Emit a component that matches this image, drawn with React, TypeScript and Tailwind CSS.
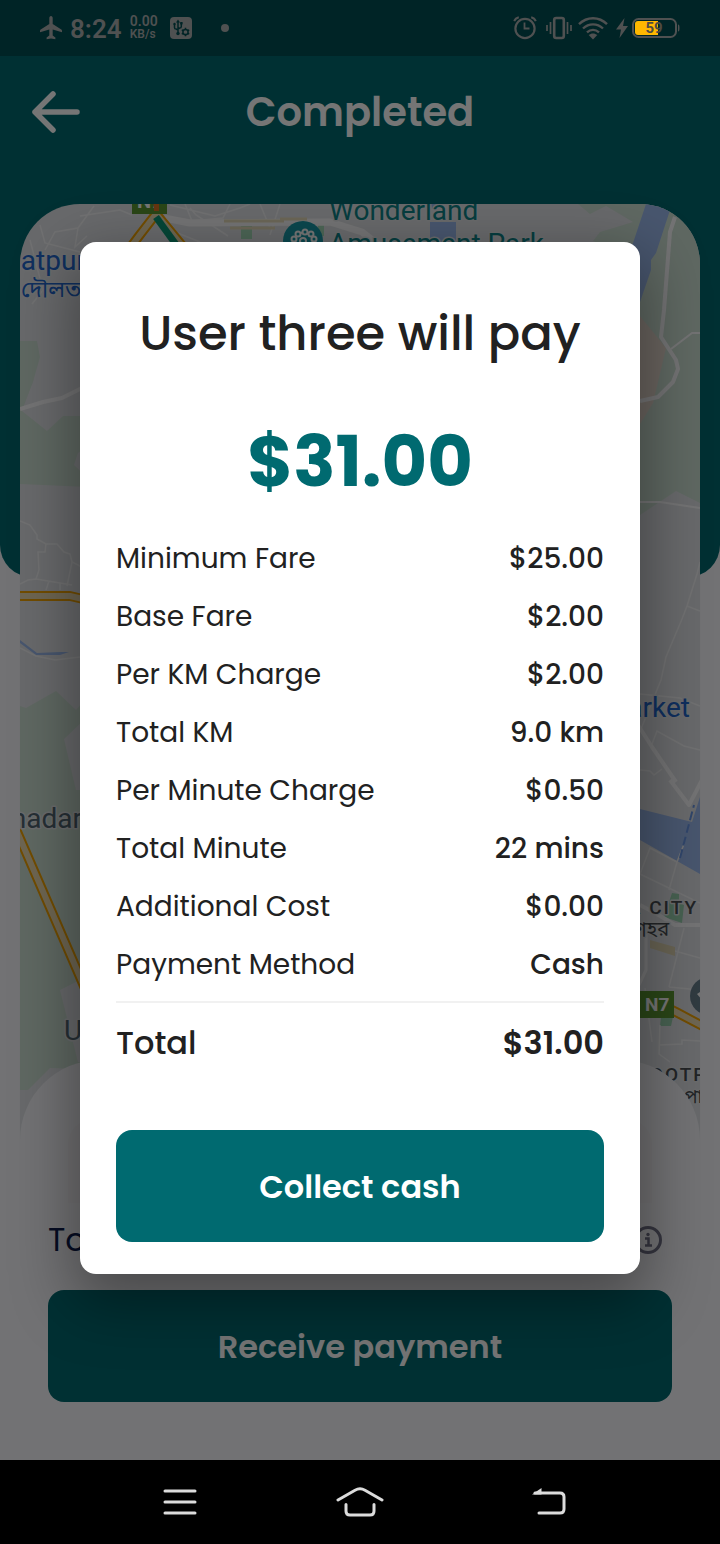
import React from "react";

const fareRows = [
  { label: "Minimum Fare", value: "$25.00" },
  { label: "Base Fare", value: "$2.00" },
  { label: "Per KM Charge", value: "$2.00" },
  { label: "Total KM", value: "9.0 km" },
  { label: "Per Minute Charge", value: "$0.50" },
  { label: "Total Minute", value: "22 mins" },
  { label: "Additional Cost", value: "$0.00" },
  { label: "Payment Method", value: "Cash" },
];

function PlaneIcon() {
  return (
    <svg width="22" height="24" viewBox="0 0 22 24" fill="currentColor" aria-hidden="true">
      <path d="M11 0c1.1 0 1.700 1 1.700 2.200V8l8.600 5.600c.5.300.7.700.7 1.300v1.300l-9.300-2.700v6l2.700 2v1.700L11 22.400l-4.400.8v-1.700l2.700-2v-6L0 16.200v-1.300c0-.6.200-1 .7-1.300L9.300 8V2.200C9.300 1 9.900 0 11 0z" />
    </svg>
  );
}

function UsbIcon() {
  return (
    <svg width="22" height="22" viewBox="0 0 22 22" aria-hidden="true">
      <rect width="22" height="22" rx="4" fill="#4f5151" />
      <g fill="none" stroke="#002426" strokeWidth="1.500">
        <path d="M8 4v12M4.500 7v3.500c0 1 .6 1.600 1.600 1.600L8 13M11.300 6v3.500c0 1-.6 1.600-1.600 1.600L8 12" />
        <circle cx="15.500" cy="15" r="2.600" />
        <path d="M15.500 10.700v1.700M15.500 17.600v1.700M11.800 12.900l1.400.8M17.800 16.300l1.400.8M11.800 17.100l1.400-.8M17.800 13.700l1.400-.8" />
      </g>
      <path d="M8 2.500l2 3H6z" fill="#002426" />
      <circle cx="8" cy="16.500" r="1.700" fill="#002426" />
      <circle cx="4.500" cy="7" r="1.200" fill="#002426" />
      <rect x="10.200" y="5" width="2.400" height="2.400" fill="#002426" />
    </svg>
  );
}

function AlarmIcon() {
  return (
    <svg width="24" height="24" viewBox="0 0 24 24" fill="none" stroke="currentColor" aria-hidden="true">
      <circle cx="12" cy="12.500" r="9.600" strokeWidth="2.200" />
      <path d="M11.500 6.500V12.500H16.500" strokeWidth="1.800" />
      <path d="M1.200 5.200C2 3.200 3.700 1.800 5.800 1.300M22.800 5.200C22 3.200 20.300 1.800 18.200 1.300" strokeWidth="2" />
    </svg>
  );
}

function VibrateIcon() {
  return (
    <svg width="26" height="24" viewBox="0 0 26 24" fill="none" stroke="currentColor" aria-hidden="true">
      <rect x="8.200" y="2" width="9.600" height="20" rx="2" strokeWidth="2.600" />
      <path d="M4.500 6v12M21.500 6v12M1 9v6M25 9v6" strokeWidth="1.700" />
    </svg>
  );
}

function WifiIcon() {
  return (
    <svg width="30" height="23" viewBox="0 0 30 23" fill="none" stroke="currentColor" aria-hidden="true">
      <path d="M1 7.200C9 -.8 21 -.8 29 7.200M5 11.500c5.800-5.500 14.200-5.500 20 0M9 15.300c3.500-3.200 8.500-3.200 12 0" strokeWidth="2.400" />
      <path d="M15 22.500l-4.300-4.400c2.400-2.200 6.200-2.200 8.600 0z" fill="currentColor" stroke="none" />
    </svg>
  );
}

function BatteryIcon() {
  return (
    <svg width="48" height="20" viewBox="0 0 48 20" role="img" aria-label="Battery 59%">
      <rect x="1" y="1" width="43" height="18" rx="5.500" fill="none" stroke="#4f5151" strokeWidth="2" />
      <path d="M46 6.500c1.200 0 1.500 1 1.500 3.500s-.3 3.500-1.500 3.500z" fill="#4f5151" />
      <path d="M6 3h20v14H6a3 3 0 0 1-3-3V6a3 3 0 0 1 3-3z" fill="#ffb800" />
      <text x="22" y="15" textAnchor="middle" fontSize="15" fontWeight="700" fill="#4f4b40" className="font-['Roboto',sans-serif]">59</text>
    </svg>
  );
}

function StatusBar() {
  return (
    <div className="flex h-14 items-center bg-[#002426] pl-10 pr-10 font-['Roboto',sans-serif] text-[#4f5151]">
      <PlaneIcon />
      <span className="ml-2 pt-0.5 text-[26px] font-semibold leading-8">8:24</span>
      <span className="ml-2 flex flex-col text-xs font-semibold leading-[13px]">
        <span className="text-sm leading-[13px]">0.00</span>
        <span>KB/s</span>
      </span>
      <span className="ml-3">
        <UsbIcon />
      </span>
      <span className="ml-[29px] size-2 rounded-full bg-[#4f5151]" />
      <div className="ml-auto flex items-center">
        <AlarmIcon />
        <span className="ml-[9px]"><VibrateIcon /></span>
        <span className="ml-[6px]"><WifiIcon /></span>
        <svg className="ml-2" width="12" height="20" viewBox="0 0 12 20" fill="currentColor" aria-hidden="true">
          <path d="M8.500 0L0 11.500h5L3.500 20L12 8H7z" />
        </svg>
        <span className="ml-1"><BatteryIcon /></span>
      </div>
    </div>
  );
}

function MapView() {
  return (
    <svg
      className="absolute inset-0 h-full w-full font-['Roboto',sans-serif]"
      viewBox="20 204 680 936"
      preserveAspectRatio="xMidYMin slice"
      role="img"
      aria-label="Trip map"
    >
      <rect x="20" y="204" width="680" height="936" fill="#e3e5e9" />

      <g fill="#d0e2d6">
        <path d="M20 341H37L40 357L33 382L22 410L20 412z" />
        <path d="M20 380H33L22 411L47 431L63 416H110V488L20 484z" />
        <path d="M20 706L26 708L56 691L76 710L110 670V1070L50 1068L28 1090H20z" />
        <path d="M578 204H700V503L676 491L640 515H600V244L593 241L600 232L633 222L606 206L590 214z" />
        <path d="M602 240H601L608 232H680V310H600z" />
        <path d="M241 226h11v13h-11zM318 224h6v12h-6z" fill="#a5dcb9" />
        <path d="M672 893l7 1v9l5 2-2 18-18-6z" fill="#9bd3b1" />
        <path d="M661 1017h12l-2 9h-11z" fill="#9bd3b1" />
      </g>
      <path d="M76 982L60 990L78 1062H110V970z" fill="#e3e5e9" />
      <path d="M84 720L64 739L76 790H110z" fill="#e3e5e9" />
      <path d="M90 445L78 453L74 465L90 480z" fill="#e3e5e9" />
      <path d="M640 316L666 348L653 403L640 424H600V316z" fill="#e6dacf" />

      <g fill="#9dbcf0">
        <path d="M646 204H672L656 253L651 260V270L640 302L620 330V260L633 243z" />
        <path d="M430 222h26v20h-26zM431 204h6v5h-5z" />
        <path d="M600 800L640 809L692 822L700 797V874L640 840L600 820z" />
        <path d="M20 640L37 653L60 652L69 652L60 655L36 655L20 643z" />
      </g>

      <g fill="none" stroke="#f4f5f7" strokeWidth="1.500">
        <path d="M45 250L55 232L78 228L94 206M78 228L75 247L87 236M40 225L45 243L80 252M80 216L120 210L132 215M185 204L192 221L223 218L230 204M170 205L215 216L240 208L250 204M150 212L175 232L200 242M190 208L196 215L228 236M260 204L270 228M280 204L270 235" />
        <path d="M30 240L43 290L32 304M20 521L30 525L37 535V539L46 544H57L64 552L70 554L72 562L80 566L110 574M46 544L45 552H38L39 570L36 579L28 580L20 584M36 579L72 585M72 562L67 586M49 581L46 590M60 583V590" />
        <path d="M20 648L36 656L55 660L80 657L110 678" />
        <path d="M700 562L697 574L687 606L682 619L666 657L661 680L641 729M687 606L700 611M640 694L680 698L700 706M652 744L657 731L684 746L700 750M640 770L650 771L654 775L662 769" />
        <path d="M640 874L650 848L677 862L669 890M677 862L684 844M640 874L700 903M684 928L669 987M675 951L700 958M669 987L700 990M645 988L652 1042M660 1025L659 1054L670 1062M659 1045L682 1044V1040L700 1041" />
      </g>
      <g fill="none" stroke="#fbfbfc" strokeWidth="4" strokeLinejoin="round">
        <path d="M20 409L43 402L62 398L90 384" />
        <path d="M164 218L190 223L330 222L362 232L380 246" strokeWidth="7" />
        <path d="M675 217L670 232L664 310L661 337L676 360L678 369L673 382L658 397L640 401" />
        <path d="M671 349L692 333H700" strokeWidth="2" />
        <path d="M640 502H660L700 508" strokeWidth="2" />
        <path d="M638 725L652 747L676 782M670 780L689 805L702 780" />
        <path d="M640 905L657 914L675 925H700" />
        <path d="M646 930v40l-7 15" strokeWidth="3" />
      </g>
      <path d="M224 221h60M230 228h45M280 219h27" stroke="#eadfbd" strokeWidth="3" />
      <path d="M650 940L675 947V956L650 948z" fill="#e3d8b6" />
      <path d="M680 858L694 805" stroke="#6a97e6" strokeWidth="2" strokeDasharray="9 4" />

      <g fill="none" strokeLinejoin="round">
        <path d="M110 275L139 236L156 214L184 248L205 280M20 596H70L83 599H110M12 820L90 1000M660 1004L676 1012L710 1030" stroke="#f6a600" strokeWidth="10" />
        <path d="M110 275L139 236L156 214L184 248L205 280M20 596H70L83 599H110M12 820L90 1000M660 1004L676 1012L710 1030" stroke="#f0deb4" strokeWidth="6" />
        <path d="M156 217L180 250" stroke="#0b9a78" strokeWidth="7" />
      </g>

      <rect x="132" y="190" width="35" height="24" fill="#5d9834" />
      <text x="137" y="208" fontSize="20" fontWeight="700" fill="#fff">N7</text>
      <path d="M153 196h6v15h-5z" fill="#df7124" />
      <rect x="620" y="991" width="54" height="27" fill="#5d9834" />
      <text x="645" y="1011" fontSize="19" fontWeight="700" fill="#fff">N7</text>

      <circle cx="303" cy="241" r="20" fill="#189baa" />
      <g fill="#189baa" stroke="#fff" strokeWidth="2">
        <path d="M295 240L297 235L303 232L309 234L315 239" fill="none" />
        <circle cx="294" cy="239" r="2.500" />
        <circle cx="298" cy="234" r="2.500" />
        <circle cx="305" cy="232" r="2.500" />
        <circle cx="311" cy="234" r="2.500" />
        <circle cx="314" cy="239" r="2.500" />
        <circle cx="303" cy="241" r="3" />
      </g>
      <circle cx="709" cy="996" r="19" fill="#69818f" />
      <path d="M697 994l6-4v11z" fill="#fff" />

      <g stroke="#e6e9ec" strokeWidth="3" paintOrder="stroke" strokeLinejoin="round">
        <g fontSize="28" fill="#0f858a">
          <text x="329" y="220">Wonderland</text>
          <text x="329" y="253">Amusement Park</text>
        </g>
        <g fill="#2166cc">
          <text x="-35" y="270" fontSize="28">Daulatpur</text>
          <text x="21" y="297" fontSize="23" className="font-['Noto_Sans_Bengali','Noto_Sans',sans-serif]">দৌলতপুর</text>
          <text x="690" y="717" fontSize="28" textAnchor="end">Market</text>
        </g>
        <g fill="#536773">
          <text x="-32" y="828" fontSize="28">Ahmadar</text>
          <text x="64" y="1040" fontSize="28">U</text>
        </g>
        <g fill="#4b5054">
          <text x="698" y="914" fontSize="19" fontWeight="500" letterSpacing="2" textAnchor="end">A CITY</text>
          <text x="633" y="936" fontSize="20" className="font-['Noto_Sans_Bengali','Noto_Sans',sans-serif]">শহর</text>
          <text x="650" y="1081" fontSize="19" fontWeight="500" letterSpacing="2">OOTPARA</text>
          <text x="684" y="1103" fontSize="19" className="font-['Noto_Sans_Bengali','Noto_Sans',sans-serif]">পাড়া</text>
        </g>
      </g>
    </svg>
  );
}

function FareDialog() {
  return (
    <div className="absolute inset-0 z-10 flex items-center justify-center bg-black/54 px-20">
      <section
        role="dialog"
        aria-modal="true"
        aria-labelledby="fare-title"
        className="flex w-full flex-col rounded-2xl bg-white px-9 pb-8 pt-14 text-[#212121] shadow-[0_22px_60px_8px_rgba(0,0,0,0.36)]"
      >
        <h2 id="fare-title" className="whitespace-nowrap text-center text-[48px] font-medium leading-[72px]">
          User three will pay
        </h2>
        <p className="mt-[38px] text-center text-[70px] font-bold leading-[108px] text-[#006a70]">$31.00</p>
        <dl className="mt-[14px]">
          {fareRows.map((row) => (
            <div key={row.label} className="flex h-[58px] items-center justify-between text-[28px]">
              <dt>{row.label}</dt>
              <dd className="font-medium">{row.value}</dd>
            </div>
          ))}
          <div className="mt-[7px] flex h-[82px] items-center justify-between border-t-2 border-[#f1f1f1] text-[32px] font-medium">
            <dt>Total</dt>
            <dd className="font-semibold">$31.00</dd>
          </div>
        </dl>
        <button type="button" className="mt-[47px] h-28 rounded-2xl bg-[#006a70] pt-0.5 text-[32px] font-semibold text-white">
          Collect cash
        </button>
      </section>
    </div>
  );
}

function NavigationBar() {
  return (
    <nav className="grid h-[84px] grid-cols-3 items-center bg-black px-[90px] text-[#dcdcdc]">
      <button type="button" aria-label="Recent apps" className="justify-self-center">
        <svg width="34" height="28" viewBox="0 0 34 28" stroke="currentColor" strokeWidth="3" strokeLinecap="round">
          <path d="M2 3h30M2 14h30M2 25h30" />
        </svg>
      </button>
      <button type="button" aria-label="Home" className="justify-self-center">
        <svg width="48" height="30" viewBox="0 0 48 30" fill="none" stroke="currentColor" strokeWidth="3" strokeLinecap="round">
          <path d="M2 13L19 3.200Q24 .5 29 3.200L46 13M10 17.500V24Q10 28 14 28H34Q38 28 38 24V17.500" />
        </svg>
      </button>
      <button type="button" aria-label="Back" className="justify-self-center pl-[18px]">
        <svg width="34" height="28" viewBox="0 0 34 28" fill="none" stroke="currentColor" strokeWidth="3" strokeLinecap="round">
          <path d="M3 5H28Q32 5 32 9V21Q32 25 28 25H7" />
          <path d="M0 6.500L9.500 0V6.500z" fill="currentColor" stroke="none" />
        </svg>
      </button>
    </nav>
  );
}

export default function App() {
  return (
    <div className="flex min-h-screen flex-col bg-[#f8f9fd] font-['Poppins','Inter',sans-serif]">
      <StatusBar />
      <main className="relative isolate flex flex-1 flex-col">
        <div className="absolute inset-x-0 top-0 -z-10 h-[521px] rounded-b-[32px] bg-[#006a70]" />
        <header className="grid h-28 grid-cols-[56px_1fr_56px] items-center px-7 text-white">
          <button type="button" aria-label="Go back">
            <svg width="56" height="48" viewBox="0 0 56 48" fill="none" stroke="currentColor" strokeWidth="5.500" strokeLinecap="round" strokeLinejoin="round">
              <path d="M49 24H7M25 6L7 24L25 42" />
            </svg>
          </button>
          <h1 className="text-center text-[40px] font-semibold">Completed</h1>
        </header>
        <div className="mx-5 mt-9 flex flex-1 flex-col">
          <div className="relative min-h-[600px] flex-1 overflow-hidden rounded-t-[60px]">
            <MapView />
          </div>
          <div className="relative -mt-20 rounded-t-[80px] bg-[#f8f9fd] px-7 pb-[58px] pt-[60px]">
            <div className="mx-5 h-[83px] rounded-t-3xl bg-[#f6f5f8]" />
            <div className="flex h-[74px] items-center justify-between pr-[9px] text-[32px] text-[#0b1b4d]">
              <span>Total</span>
              <svg width="30" height="30" viewBox="0 0 30 30" fill="none" stroke="#747489" strokeWidth="3" aria-hidden="true">
                <circle cx="15" cy="15" r="12.500" />
                <path d="M12 13.500H15.500V20M12 20.500H19" strokeWidth="2.500" />
                <circle cx="15" cy="9.500" r="1.700" fill="#747489" stroke="none" />
              </svg>
            </div>
            <button type="button" className="mt-[13px] h-28 w-full rounded-2xl bg-[#006a70] pt-0.5 text-[32px] font-semibold text-white">
              Receive payment
            </button>
          </div>
        </div>
        <FareDialog />
      </main>
      <NavigationBar />
    </div>
  );
}
